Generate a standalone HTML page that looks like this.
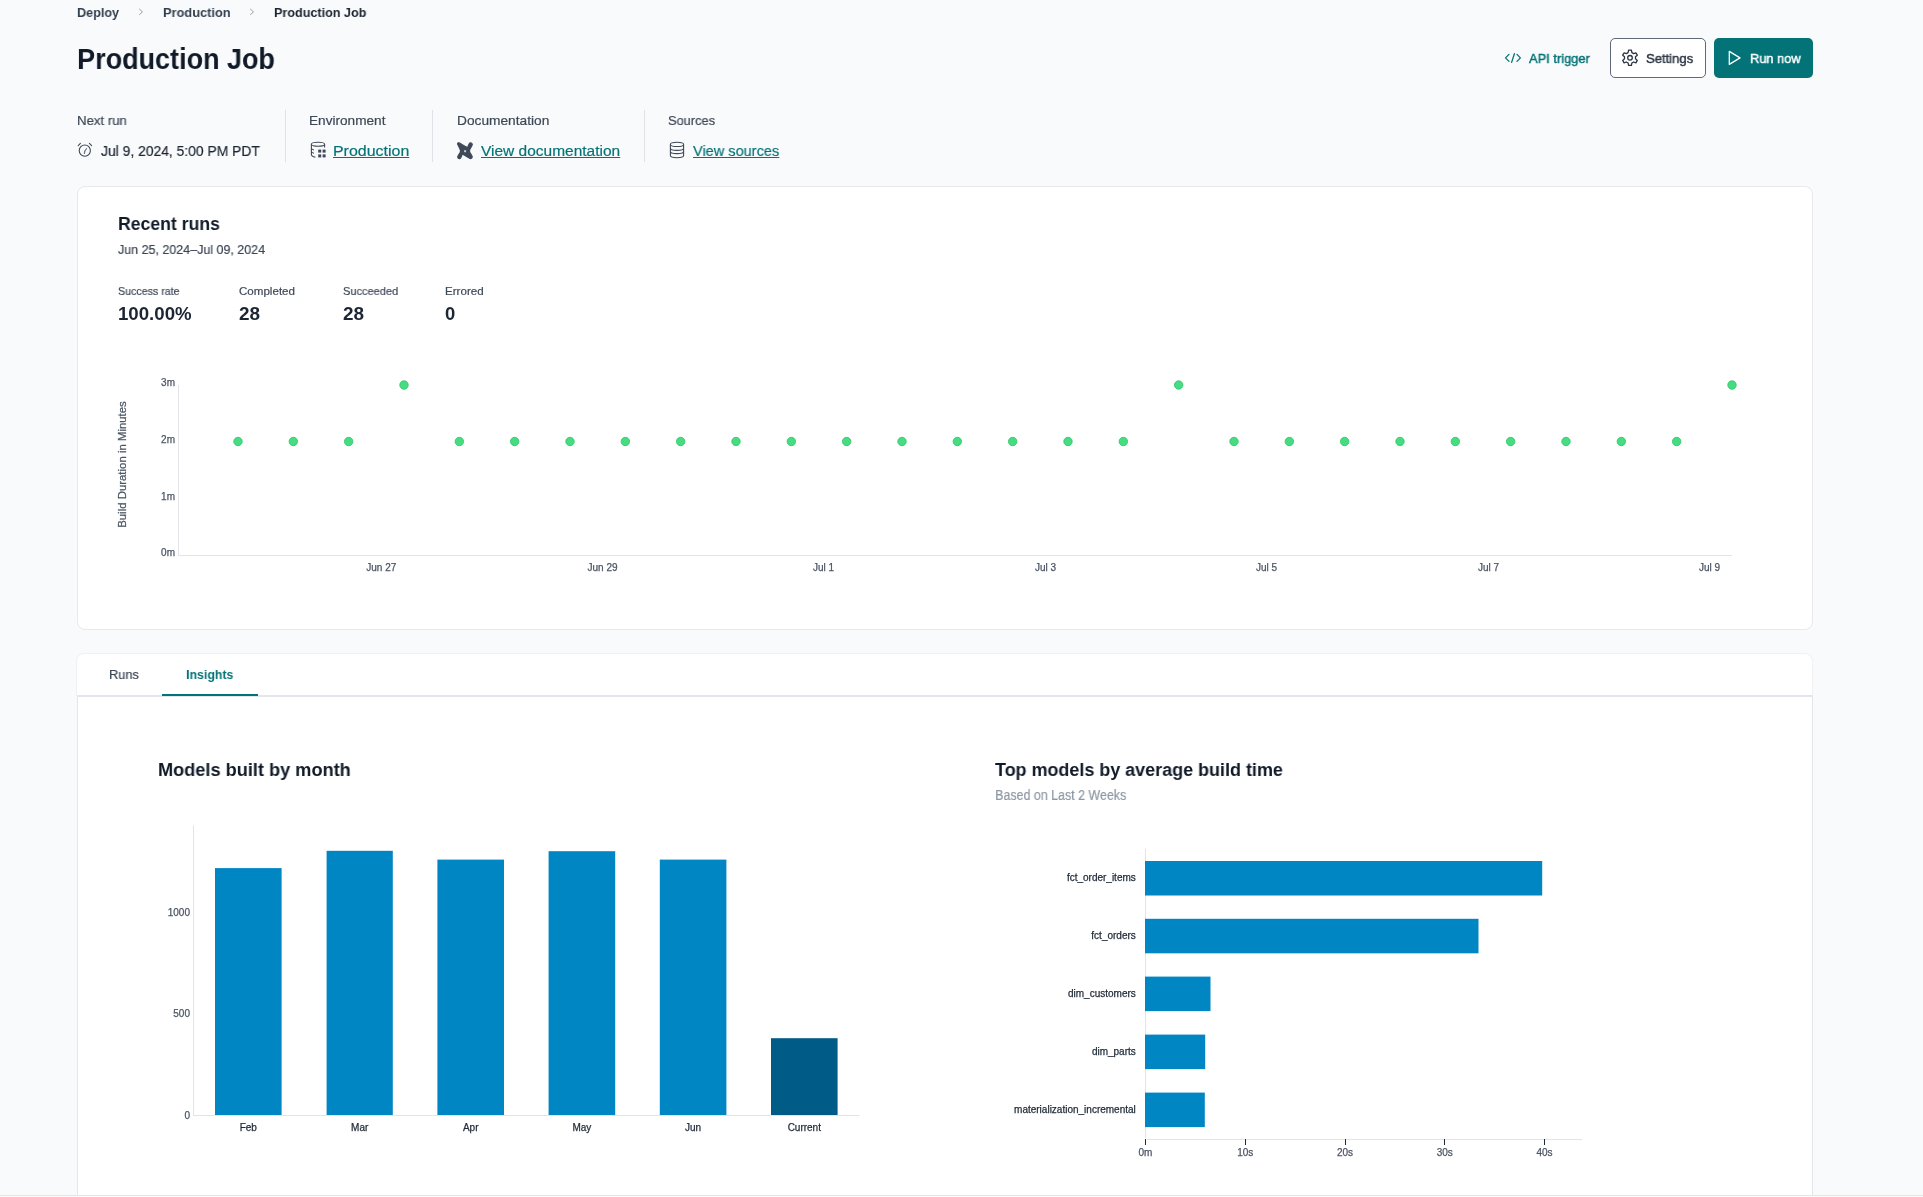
<!DOCTYPE html><html><head><meta charset="utf-8"><style>
html,body{margin:0;padding:0;}
body{width:1923px;height:1197px;position:relative;overflow:hidden;background:#f9fafb;font-family:"Liberation Sans",sans-serif;}
.t{position:absolute;white-space:nowrap;will-change:transform;}
</style></head><body>
<div class="t" style="left:76.90px;top:5.79px;font-size:13.24px;line-height:13.24px;font-weight:700;color:#334050;transform:scaleX(0.9514);transform-origin:0.90px 0;">Deploy</div>
<div class="t" style="left:162.90px;top:5.79px;font-size:13.24px;line-height:13.24px;font-weight:700;color:#334050;transform:scaleX(0.9670);transform-origin:0.90px 0;">Production</div>
<div class="t" style="left:274.10px;top:5.79px;font-size:13.24px;line-height:13.24px;font-weight:700;color:#1b2431;transform:scaleX(0.9509);transform-origin:0.90px 0;">Production Job</div>
<svg style="position:absolute;left:138px;top:8px;" width="6" height="8" viewBox="0 0 6 8"><path d="M1.2 0.9 L4.5 3.9 L1.2 6.8" fill="none" stroke="#98a1ad" stroke-width="1"/></svg>
<svg style="position:absolute;left:249px;top:8px;" width="6" height="8" viewBox="0 0 6 8"><path d="M1.2 0.9 L4.5 3.9 L1.2 6.8" fill="none" stroke="#98a1ad" stroke-width="1"/></svg>
<div class="t" style="left:77.10px;top:44.64px;font-size:28.78px;line-height:28.78px;font-weight:700;color:#111a28;transform:scaleX(0.9380);transform-origin:1.90px 0;">Production Job</div>
<svg style="position:absolute;left:1503px;top:52px;" width="20" height="12" viewBox="0 0 20 12"><path d="M6 2.4 L2.5 5.9 L6 9.4 M11.4 1.7 L8.6 10.4 M14 2.4 L17.4 5.9 L14 9.4" fill="none" stroke="#047377" stroke-width="1.3" stroke-linecap="round" stroke-linejoin="round"/></svg>
<div class="t" style="left:1529.25px;top:51.67px;font-size:13.38px;line-height:13.38px;font-weight:400;color:#047377;transform:scaleX(0.9627);transform-origin:0.05px 0;-webkit-text-stroke-width:0.45px;">API trigger</div>
<div style="position:absolute;left:1610px;top:38px;width:94px;height:38px;border:1px solid #5f6a78;border-radius:5px;background:#fff;"></div>
<svg style="position:absolute;left:1621px;top:49px;" width="18" height="18" viewBox="0 0 18 18"><g fill="none" stroke="#2b3543" stroke-width="1.3" stroke-linejoin="round"><path d="M7.6 1.2 H10.4 L10.9 3.6 L12.6 4.6 L14.9 3.8 L16.3 6.2 L14.5 7.8 V9.8 L16.3 11.4 L14.9 13.8 L12.6 13 L10.9 14 L10.4 16.4 H7.6 L7.1 14 L5.4 13 L3.1 13.8 L1.7 11.4 L3.5 9.8 V7.8 L1.7 6.2 L3.1 3.8 L5.4 4.6 L7.1 3.6 Z"/><circle cx="9" cy="8.8" r="2.3"/></g></svg>
<div class="t" style="left:1646.30px;top:51.67px;font-size:13.38px;line-height:13.38px;font-weight:400;color:#2b3543;transform:scaleX(0.9746);transform-origin:0.60px 0;-webkit-text-stroke-width:0.45px;">Settings</div>
<div style="position:absolute;left:1714px;top:38px;width:99px;height:40px;border-radius:5px;background:#037377;"></div>
<svg style="position:absolute;left:1727px;top:50px;" width="16" height="16" viewBox="0 0 16 16"><path d="M2.3 1.4 V14.4 L13 7.9 Z" fill="none" stroke="#fff" stroke-width="1.3" stroke-linejoin="round"/></svg>
<div class="t" style="left:1749.90px;top:51.67px;font-size:13.38px;line-height:13.38px;font-weight:400;color:#fff;transform:scaleX(0.9556);transform-origin:1.10px 0;-webkit-text-stroke-width:0.45px;">Run now</div>
<div class="t" style="left:76.50px;top:113.67px;font-size:13.38px;line-height:13.38px;font-weight:400;color:#3d4757;transform:scaleX(0.9856);transform-origin:1.10px 0;-webkit-text-stroke-width:0.2px;">Next run</div>
<div class="t" style="left:309.20px;top:113.67px;font-size:13.38px;line-height:13.38px;font-weight:400;color:#3d4757;transform:scaleX(1.0182);transform-origin:1.10px 0;-webkit-text-stroke-width:0.2px;">Environment</div>
<div class="t" style="left:456.70px;top:113.67px;font-size:13.38px;line-height:13.38px;font-weight:400;color:#3d4757;transform:scaleX(1.0261);transform-origin:1.10px 0;-webkit-text-stroke-width:0.2px;">Documentation</div>
<div class="t" style="left:668.10px;top:113.67px;font-size:13.38px;line-height:13.38px;font-weight:400;color:#3d4757;transform:scaleX(0.9573);transform-origin:0.60px 0;-webkit-text-stroke-width:0.2px;">Sources</div>
<div style="position:absolute;left:285.0px;top:110px;width:1px;height:52px;background:#dfe2e7;"></div>
<div style="position:absolute;left:432.0px;top:110px;width:1px;height:52px;background:#dfe2e7;"></div>
<div style="position:absolute;left:644.0px;top:110px;width:1px;height:52px;background:#dfe2e7;"></div>
<div class="t" style="left:101.45px;top:143.09px;font-size:15.25px;line-height:15.25px;font-weight:400;color:#1d2634;transform:scaleX(0.9098);transform-origin:0.25px 0;-webkit-text-stroke-width:0.2px;">Jul 9, 2024, 5:00 PM PDT</div>
<div class="t" style="left:332.75px;top:143.09px;font-size:15.25px;line-height:15.25px;font-weight:400;color:#047377;transform:scaleX(1.0467);transform-origin:1.25px 0;-webkit-text-stroke-width:0.2px;text-decoration:underline;text-underline-offset:1px;text-decoration-thickness:1px;">Production</div>
<div class="t" style="left:481.05px;top:143.09px;font-size:15.25px;line-height:15.25px;font-weight:400;color:#047377;transform:scaleX(1.0154);transform-origin:0.05px 0;-webkit-text-stroke-width:0.2px;text-decoration:underline;text-underline-offset:1px;text-decoration-thickness:1px;">View documentation</div>
<div class="t" style="left:692.55px;top:143.09px;font-size:15.25px;line-height:15.25px;font-weight:400;color:#047377;transform:scaleX(0.9538);transform-origin:0.05px 0;-webkit-text-stroke-width:0.2px;text-decoration:underline;text-underline-offset:1px;text-decoration-thickness:1px;">View sources</div>
<svg style="position:absolute;left:76px;top:141px;" width="18" height="18" viewBox="0 0 18 18"><g fill="none" stroke="#3f4957" stroke-width="1.1" stroke-linecap="round"><circle cx="8.8" cy="9.6" r="5.6"/><path d="M2.2 4.6 L4.4 2.4 M13.4 2.4 L15.6 4.6"/><path d="M8.4 12.4 C8.4 10.6 9.2 8.8 10.6 7.6" stroke-width="1.2" stroke="#6d7682"/></g></svg>
<svg style="position:absolute;left:309px;top:140px;" width="20" height="20" viewBox="0 0 20 20"><g fill="none" stroke="#3f4957" stroke-width="1.1"><ellipse cx="9" cy="4.2" rx="6.6" ry="2"/><path d="M2.4 4.2 V14.6 C2.4 15.8 4 16.8 6.4 17.2 M15.6 4.2 V7.6 M2.4 8.2 C2.4 9 3.4 9.6 5 10 M2.4 11.4 C2.4 12.2 3.4 12.8 5 13.2"/></g><g fill="#3f4957"><rect x="9.2" y="9.6" width="3" height="3"/><rect x="13.6" y="9.6" width="3" height="3"/><rect x="9.2" y="14.4" width="3" height="3"/><rect x="13.6" y="14.4" width="3" height="3"/></g></svg>
<svg style="position:absolute;left:455px;top:141px;" width="20" height="20" viewBox="0 0 20 20"><path fill="#3f4957" stroke="#3f4957" stroke-width="1.2" stroke-linejoin="round" d="M2.6 3.0 C2.4 2.2 3.2 1.7 4 1.9 C5 2.2 9.6 5.2 12.6 6.6 C13.2 5.2 13.9 3.4 14.4 2.6 C14.9 1.8 16 1.7 16.8 2.4 C17.4 3 17.4 3.8 17 4.4 L14.8 8.4 C14.4 9.2 14.4 10.4 14.8 11.2 L17 15 C17.4 15.8 17.2 16.8 16.4 17.3 C15.6 17.8 14.8 17.5 14.2 17.1 C12.6 16.2 9.6 14.2 7.2 13.0 C6.8 14.4 6.2 16 5.6 16.9 C5.1 17.7 4 17.9 3.3 17.3 C2.6 16.7 2.6 15.8 3 15.1 L5.2 11.2 C5.6 10.4 5.6 9.2 5.2 8.4 Z"/><rect x="9.1" y="9.2" width="2" height="2" fill="#c9ced5"/></svg>
<svg style="position:absolute;left:667px;top:140px;" width="20" height="20" viewBox="0 0 20 20"><g fill="none" stroke="#3f4957" stroke-width="1.1"><ellipse cx="10" cy="4.4" rx="6.6" ry="2.1"/><path d="M3.4 4.4 V15.6 C3.4 16.8 6.4 17.8 10 17.8 C13.6 17.8 16.6 16.8 16.6 15.6 V4.4 M3.4 8.2 C3.4 9.4 6.4 10.4 10 10.4 C13.6 10.4 16.6 9.4 16.6 8.2 M3.4 11.4 C3.4 12.6 6.4 13.6 10 13.6 C13.6 13.6 16.6 12.6 16.6 11.4"/></g></svg>
<div style="position:absolute;left:77px;top:186px;width:1734px;height:442px;background:#fff;border:1px solid #e7e9ec;border-radius:8px;"></div>
<div class="t" style="left:117.95px;top:215.41px;font-size:18.42px;line-height:18.42px;font-weight:700;color:#111a28;transform:scaleX(0.9564);transform-origin:1.25px 0;">Recent runs</div>
<div class="t" style="left:118.40px;top:242.92px;font-size:13.09px;line-height:13.09px;font-weight:400;color:#3b4555;transform:scaleX(0.9542);transform-origin:0.20px 0;-webkit-text-stroke-width:0.2px;">Jun 25, 2024–Jul 09, 2024</div>
<div class="t" style="left:118.00px;top:285.50px;font-size:11.22px;line-height:11.22px;font-weight:400;color:#3f4958;transform:scaleX(0.9490);transform-origin:0.50px 0;-webkit-text-stroke-width:0.2px;">Success rate</div>
<div class="t" style="left:118.15px;top:305.41px;font-size:18.42px;line-height:18.42px;font-weight:700;color:#1b2533;transform:scaleX(1.0134);transform-origin:1.15px 0;">100.00%</div>
<div class="t" style="left:239.35px;top:285.50px;font-size:11.22px;line-height:11.22px;font-weight:400;color:#3f4958;transform:scaleX(1.0321);transform-origin:0.55px 0;-webkit-text-stroke-width:0.2px;">Completed</div>
<div class="t" style="left:239.25px;top:305.41px;font-size:18.42px;line-height:18.42px;font-weight:700;color:#1b2533;transform:scaleX(1.0286);transform-origin:0.65px 0;">28</div>
<div class="t" style="left:342.90px;top:285.50px;font-size:11.22px;line-height:11.22px;font-weight:400;color:#3f4958;transform:scaleX(0.9818);transform-origin:0.50px 0;-webkit-text-stroke-width:0.2px;">Succeeded</div>
<div class="t" style="left:342.75px;top:305.41px;font-size:18.42px;line-height:18.42px;font-weight:700;color:#1b2533;transform:scaleX(1.0286);transform-origin:0.65px 0;">28</div>
<div class="t" style="left:444.70px;top:285.50px;font-size:11.22px;line-height:11.22px;font-weight:400;color:#3f4958;transform:scaleX(1.0336);transform-origin:0.90px 0;-webkit-text-stroke-width:0.2px;">Errored</div>
<div class="t" style="left:444.90px;top:305.41px;font-size:18.42px;line-height:18.42px;font-weight:700;color:#1b2533;">0</div>
<div style="position:absolute;left:76px;top:653px;width:1735px;height:42px;background:#fff;border:1px solid #eff1f3;border-bottom:none;border-radius:8px 8px 0 0;"></div>
<div style="position:absolute;left:77px;top:695px;width:1736px;height:2px;background:#e3e6ea;"></div>
<div style="position:absolute;left:77px;top:697px;width:1734px;height:498px;background:#fff;border-left:1px solid #e3e6ea;border-right:1px solid #e3e6ea;"></div>
<div style="position:absolute;left:0px;top:1195px;width:1923px;height:1px;background:#e1e4e8;"></div>
<div style="position:absolute;left:0px;top:1196px;width:1923px;height:1px;background:#fcfcfd;"></div>
<div class="t" style="left:108.70px;top:667.79px;font-size:13.24px;line-height:13.24px;font-weight:400;color:#3c4656;transform:scaleX(0.9642);transform-origin:1.10px 0;-webkit-text-stroke-width:0.2px;">Runs</div>
<div class="t" style="left:186.10px;top:667.73px;font-size:13.31px;line-height:13.31px;font-weight:700;color:#047377;transform:scaleX(0.9284);transform-origin:0.90px 0;">Insights</div>
<div style="position:absolute;left:162px;top:693.5px;width:96px;height:2.5px;background:#047377;"></div>
<div class="t" style="left:157.95px;top:761.41px;font-size:18.42px;line-height:18.42px;font-weight:700;color:#111a28;transform:scaleX(0.9868);transform-origin:1.25px 0;">Models built by month</div>
<div class="t" style="left:995.20px;top:761.41px;font-size:18.42px;line-height:18.42px;font-weight:700;color:#111a28;transform:scaleX(0.9749);transform-origin:0.20px 0;">Top models by average build time</div>
<div class="t" style="left:994.85px;top:787.94px;font-size:14.24px;line-height:14.24px;font-weight:400;color:#8d97a5;transform:scaleX(0.8738);transform-origin:1.15px 0;-webkit-text-stroke-width:0.2px;">Based on Last 2 Weeks</div>
<svg style="position:absolute;left:0;top:0;will-change:transform" width="1923" height="1197" font-family="Liberation Sans, sans-serif"><line x1="178.5" y1="385" x2="178.5" y2="556" stroke="#e1e4e9" stroke-width="1"/><line x1="178" y1="555.5" x2="1732" y2="555.5" stroke="#e1e4e9" stroke-width="1"/><text x="175" y="385.9" text-anchor="end" fill="#4b5563" stroke="#4b5563" stroke-width="0.25" font-size="10" textLength="13.89" lengthAdjust="spacingAndGlyphs">3m</text><text x="175" y="442.7" text-anchor="end" fill="#4b5563" stroke="#4b5563" stroke-width="0.25" font-size="10" textLength="13.89" lengthAdjust="spacingAndGlyphs">2m</text><text x="175" y="499.5" text-anchor="end" fill="#4b5563" stroke="#4b5563" stroke-width="0.25" font-size="10" textLength="13.89" lengthAdjust="spacingAndGlyphs">1m</text><text x="175" y="556.4" text-anchor="end" fill="#4b5563" stroke="#4b5563" stroke-width="0.25" font-size="10" textLength="13.89" lengthAdjust="spacingAndGlyphs">0m</text><text x="381.3" y="571.2" text-anchor="middle" fill="#4b5563" stroke="#4b5563" stroke-width="0.25" font-size="10" textLength="30.02" lengthAdjust="spacingAndGlyphs">Jun 27</text><text x="602.5" y="571.2" text-anchor="middle" fill="#4b5563" stroke="#4b5563" stroke-width="0.25" font-size="10" textLength="30.02" lengthAdjust="spacingAndGlyphs">Jun 29</text><text x="823.5" y="571.2" text-anchor="middle" fill="#4b5563" stroke="#4b5563" stroke-width="0.25" font-size="10" textLength="21.12" lengthAdjust="spacingAndGlyphs">Jul 1</text><text x="1045.5" y="571.2" text-anchor="middle" fill="#4b5563" stroke="#4b5563" stroke-width="0.25" font-size="10" textLength="21.12" lengthAdjust="spacingAndGlyphs">Jul 3</text><text x="1266.5" y="571.2" text-anchor="middle" fill="#4b5563" stroke="#4b5563" stroke-width="0.25" font-size="10" textLength="21.12" lengthAdjust="spacingAndGlyphs">Jul 5</text><text x="1488.5" y="571.2" text-anchor="middle" fill="#4b5563" stroke="#4b5563" stroke-width="0.25" font-size="10" textLength="21.12" lengthAdjust="spacingAndGlyphs">Jul 7</text><text x="1709.5" y="571.2" text-anchor="middle" fill="#4b5563" stroke="#4b5563" stroke-width="0.25" font-size="10" textLength="21.12" lengthAdjust="spacingAndGlyphs">Jul 9</text><text x="0" y="0" text-anchor="middle" fill="#4b5563" stroke="#4b5563" stroke-width="0.25" font-size="11.4" transform="translate(125.6 464.5) rotate(-90)">Build Duration in Minutes</text><circle cx="238.00" cy="441.5" r="4.2" fill="#47dc83" stroke="#2ccb68" stroke-width="0.9"/><circle cx="293.33" cy="441.5" r="4.2" fill="#47dc83" stroke="#2ccb68" stroke-width="0.9"/><circle cx="348.67" cy="441.5" r="4.2" fill="#47dc83" stroke="#2ccb68" stroke-width="0.9"/><circle cx="404.00" cy="385" r="4.2" fill="#47dc83" stroke="#2ccb68" stroke-width="0.9"/><circle cx="459.33" cy="441.5" r="4.2" fill="#47dc83" stroke="#2ccb68" stroke-width="0.9"/><circle cx="514.67" cy="441.5" r="4.2" fill="#47dc83" stroke="#2ccb68" stroke-width="0.9"/><circle cx="570.00" cy="441.5" r="4.2" fill="#47dc83" stroke="#2ccb68" stroke-width="0.9"/><circle cx="625.33" cy="441.5" r="4.2" fill="#47dc83" stroke="#2ccb68" stroke-width="0.9"/><circle cx="680.67" cy="441.5" r="4.2" fill="#47dc83" stroke="#2ccb68" stroke-width="0.9"/><circle cx="736.00" cy="441.5" r="4.2" fill="#47dc83" stroke="#2ccb68" stroke-width="0.9"/><circle cx="791.33" cy="441.5" r="4.2" fill="#47dc83" stroke="#2ccb68" stroke-width="0.9"/><circle cx="846.67" cy="441.5" r="4.2" fill="#47dc83" stroke="#2ccb68" stroke-width="0.9"/><circle cx="902.00" cy="441.5" r="4.2" fill="#47dc83" stroke="#2ccb68" stroke-width="0.9"/><circle cx="957.33" cy="441.5" r="4.2" fill="#47dc83" stroke="#2ccb68" stroke-width="0.9"/><circle cx="1012.67" cy="441.5" r="4.2" fill="#47dc83" stroke="#2ccb68" stroke-width="0.9"/><circle cx="1068.00" cy="441.5" r="4.2" fill="#47dc83" stroke="#2ccb68" stroke-width="0.9"/><circle cx="1123.33" cy="441.5" r="4.2" fill="#47dc83" stroke="#2ccb68" stroke-width="0.9"/><circle cx="1178.67" cy="385" r="4.2" fill="#47dc83" stroke="#2ccb68" stroke-width="0.9"/><circle cx="1234.00" cy="441.5" r="4.2" fill="#47dc83" stroke="#2ccb68" stroke-width="0.9"/><circle cx="1289.33" cy="441.5" r="4.2" fill="#47dc83" stroke="#2ccb68" stroke-width="0.9"/><circle cx="1344.67" cy="441.5" r="4.2" fill="#47dc83" stroke="#2ccb68" stroke-width="0.9"/><circle cx="1400.00" cy="441.5" r="4.2" fill="#47dc83" stroke="#2ccb68" stroke-width="0.9"/><circle cx="1455.33" cy="441.5" r="4.2" fill="#47dc83" stroke="#2ccb68" stroke-width="0.9"/><circle cx="1510.67" cy="441.5" r="4.2" fill="#47dc83" stroke="#2ccb68" stroke-width="0.9"/><circle cx="1566.00" cy="441.5" r="4.2" fill="#47dc83" stroke="#2ccb68" stroke-width="0.9"/><circle cx="1621.33" cy="441.5" r="4.2" fill="#47dc83" stroke="#2ccb68" stroke-width="0.9"/><circle cx="1676.67" cy="441.5" r="4.2" fill="#47dc83" stroke="#2ccb68" stroke-width="0.9"/><circle cx="1732.00" cy="385" r="4.2" fill="#47dc83" stroke="#2ccb68" stroke-width="0.9"/><line x1="193.5" y1="825.4" x2="193.5" y2="1116" stroke="#e1e4e9" stroke-width="1"/><line x1="193" y1="1115.5" x2="859.5" y2="1115.5" stroke="#e1e4e9" stroke-width="1"/><text x="190" y="915.9" text-anchor="end" fill="#4b5563" stroke="#4b5563" stroke-width="0.25" font-size="10" textLength="22.25" lengthAdjust="spacingAndGlyphs">1000</text><text x="190" y="1017.1" text-anchor="end" fill="#4b5563" stroke="#4b5563" stroke-width="0.25" font-size="10" textLength="16.69" lengthAdjust="spacingAndGlyphs">500</text><text x="190" y="1118.6" text-anchor="end" fill="#4b5563" stroke="#4b5563" stroke-width="0.25" font-size="10" textLength="5.56" lengthAdjust="spacingAndGlyphs">0</text><rect x="215" y="868.1" width="66.60" height="246.90" fill="#0086c2"/><text x="248.3" y="1131.3" text-anchor="middle" fill="#1f2937" stroke="#1f2937" stroke-width="0.25" font-size="10" textLength="17.23" lengthAdjust="spacingAndGlyphs">Feb</text><rect x="326.6" y="850.8" width="66.20" height="264.20" fill="#0086c2"/><text x="359.70000000000005" y="1131.3" text-anchor="middle" fill="#1f2937" stroke="#1f2937" stroke-width="0.25" font-size="10" textLength="17.22" lengthAdjust="spacingAndGlyphs">Mar</text><rect x="437.4" y="859.6" width="66.60" height="255.40" fill="#0086c2"/><text x="470.7" y="1131.3" text-anchor="middle" fill="#1f2937" stroke="#1f2937" stroke-width="0.25" font-size="10" textLength="15.56" lengthAdjust="spacingAndGlyphs">Apr</text><rect x="548.6" y="851.2" width="66.60" height="263.80" fill="#0086c2"/><text x="581.9000000000001" y="1131.3" text-anchor="middle" fill="#1f2937" stroke="#1f2937" stroke-width="0.25" font-size="10" textLength="18.89" lengthAdjust="spacingAndGlyphs">May</text><rect x="659.8" y="859.6" width="66.60" height="255.40" fill="#0086c2"/><text x="693.0999999999999" y="1131.3" text-anchor="middle" fill="#1f2937" stroke="#1f2937" stroke-width="0.25" font-size="10" textLength="16.12" lengthAdjust="spacingAndGlyphs">Jun</text><rect x="771" y="1038.2" width="66.60" height="76.80" fill="#005b86"/><text x="804.3" y="1131.3" text-anchor="middle" fill="#1f2937" stroke="#1f2937" stroke-width="0.25" font-size="10" textLength="33.35" lengthAdjust="spacingAndGlyphs">Current</text><line x1="1145.5" y1="848.8" x2="1145.5" y2="1138" stroke="#e1e4e9" stroke-width="1"/><line x1="1147" y1="1139.5" x2="1582" y2="1139.5" stroke="#e1e4e9" stroke-width="1"/><line x1="1145.5" y1="1139" x2="1145.5" y2="1145" stroke="#1f2937" stroke-width="1"/><text x="1145.5" y="1156" text-anchor="middle" fill="#4b5563" stroke="#4b5563" stroke-width="0.25" font-size="10" textLength="13.89" lengthAdjust="spacingAndGlyphs">0m</text><line x1="1245.5" y1="1139" x2="1245.5" y2="1145" stroke="#1f2937" stroke-width="1"/><text x="1245.25" y="1156" text-anchor="middle" fill="#4b5563" stroke="#4b5563" stroke-width="0.25" font-size="10" textLength="16.12" lengthAdjust="spacingAndGlyphs">10s</text><line x1="1345.5" y1="1139" x2="1345.5" y2="1145" stroke="#1f2937" stroke-width="1"/><text x="1345.0" y="1156" text-anchor="middle" fill="#4b5563" stroke="#4b5563" stroke-width="0.25" font-size="10" textLength="16.12" lengthAdjust="spacingAndGlyphs">20s</text><line x1="1444.5" y1="1139" x2="1444.5" y2="1145" stroke="#1f2937" stroke-width="1"/><text x="1444.75" y="1156" text-anchor="middle" fill="#4b5563" stroke="#4b5563" stroke-width="0.25" font-size="10" textLength="16.12" lengthAdjust="spacingAndGlyphs">30s</text><line x1="1544.5" y1="1139" x2="1544.5" y2="1145" stroke="#1f2937" stroke-width="1"/><text x="1544.5" y="1156" text-anchor="middle" fill="#4b5563" stroke="#4b5563" stroke-width="0.25" font-size="10" textLength="16.12" lengthAdjust="spacingAndGlyphs">40s</text><rect x="1145" y="861" width="397.20" height="34.5" fill="#0086c2"/><text x="1135.8" y="881.2" text-anchor="end" fill="#1f2937" stroke="#1f2937" stroke-width="0.25" font-size="10" textLength="68.92" lengthAdjust="spacingAndGlyphs">fct_order_items</text><rect x="1145" y="918.8" width="333.50" height="34.5" fill="#0086c2"/><text x="1135.8" y="939.0" text-anchor="end" fill="#1f2937" stroke="#1f2937" stroke-width="0.25" font-size="10" textLength="44.46" lengthAdjust="spacingAndGlyphs">fct_orders</text><rect x="1145" y="976.6" width="65.50" height="34.5" fill="#0086c2"/><text x="1135.8" y="996.8000000000001" text-anchor="end" fill="#1f2937" stroke="#1f2937" stroke-width="0.25" font-size="10" textLength="67.80" lengthAdjust="spacingAndGlyphs">dim_customers</text><rect x="1145" y="1034.6" width="60.20" height="34.5" fill="#0086c2"/><text x="1135.8" y="1054.8" text-anchor="end" fill="#1f2937" stroke="#1f2937" stroke-width="0.25" font-size="10" textLength="43.91" lengthAdjust="spacingAndGlyphs">dim_parts</text><rect x="1145" y="1092.6" width="59.80" height="34.5" fill="#0086c2"/><text x="1135.8" y="1112.8" text-anchor="end" fill="#1f2937" stroke="#1f2937" stroke-width="0.25" font-size="10" textLength="121.73" lengthAdjust="spacingAndGlyphs">materialization_incremental</text></svg>
</body></html>
